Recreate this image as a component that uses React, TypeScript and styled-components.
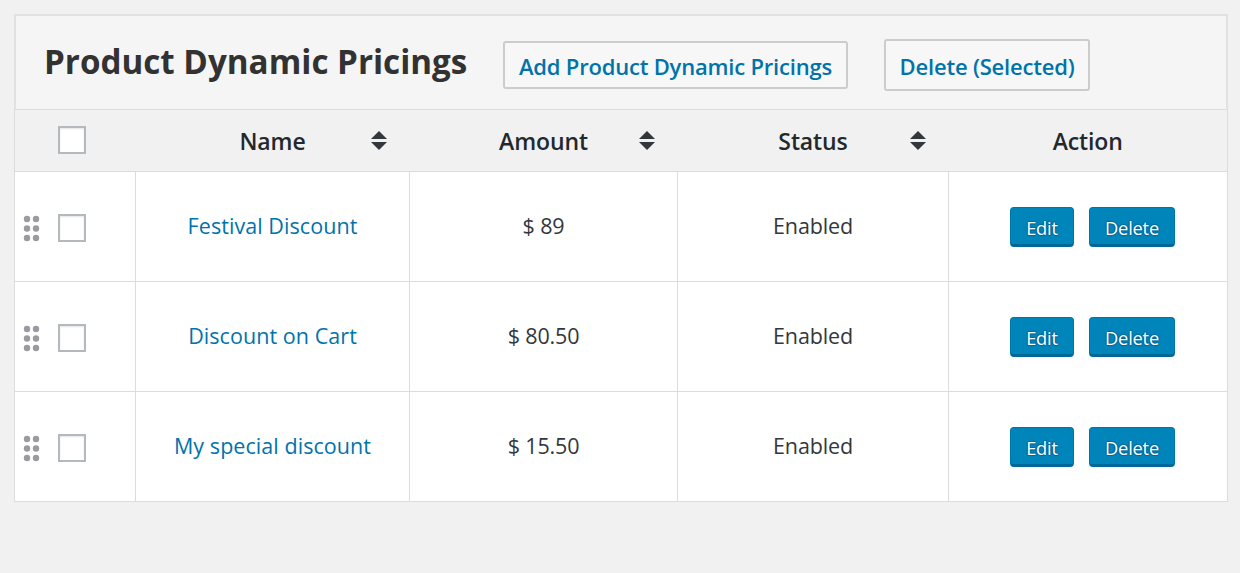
import React from "react";
import styled, { createGlobalStyle } from "styled-components";

const Global = createGlobalStyle`
  html, body { margin: 0; padding: 0; background: #f1f1f1; }
  body { font-family: "Open Sans", "Noto Sans", sans-serif; color: #32373c; }
`;

const Page = styled.div`
  width: 1240px;
  height: 573px;
  padding: 14px 12px 0 14px;
  box-sizing: border-box;
  overflow: hidden;
`;

const TitleBar = styled.div`
  display: flex;
  align-items: center;
  height: 96px;
  box-sizing: border-box;
  background: #f5f5f5;
  border: 2px solid #e1e1e1;
  border-bottom: 1px solid #dcdcdc;
  padding: 0 0 0 28px;
`;

const Title = styled.h1`
  margin: 0;
  width: 423px;
  font-size: 33.2px;
  line-height: 40px;
  font-weight: 700;
  letter-spacing: 0;
  white-space: nowrap;
  color: #323232;
  position: relative;
  top: -1px;
`;

const OutlineButton = styled.a<{ $h: number; $w: number; $ml: number }>`
  display: flex;
  align-items: center;
  justify-content: center;
  box-sizing: border-box;
  width: ${(p) => p.$w}px;
  height: ${(p) => p.$h}px;
  margin-left: ${(p) => p.$ml}px;
  padding-top: 2px;
  border: 2px solid #ccc;
  border-radius: 3px;
  background: #f7f7f7;
  color: #0073aa;
  font-size: 22px;
  font-weight: 600;
  letter-spacing: -0.2px;
  white-space: nowrap;
  position: relative;
  top: 2px;
`;

const Table = styled.table`
  width: 1213px;
  table-layout: fixed;
  border-collapse: collapse;
  background: #fff;
`;

const HeadRow = styled.tr`
  height: 61px;
  background: #f1f1f1;
`;

const HeadCell = styled.th`
  padding: 1px 0 0;
  border-bottom: 1px solid #dcdcdc;
  font-size: 23px;
  font-weight: 600;
  letter-spacing: -0.12px;
  color: #23282d;
  position: relative;
  text-align: center;
  &:first-child { border-left: 1px solid #dcdcdc; padding-top: 0; }
  &:last-child { border-right: 1px solid #dcdcdc; }
`;

const SortIcon = styled.svg`
  position: absolute;
  top: 21px;
  width: 16px;
  height: 19px;
  right: 23px;
`;

const Row = styled.tr`
  height: 110px;
`;

const Cell = styled.td`
  padding: 0;
  border: 1px solid #dcdcdc;
  text-align: center;
  font-size: 21.5px;
  letter-spacing: -0.15px;
  color: #32373c;
`;

const NameLink = styled.a`
  color: #0073aa;
  letter-spacing: 0.06px;
  position: relative;
  top: -1px;
`;

const ValueText = styled.span`
  position: relative;
  top: -1px;
`;

const CheckWrap = styled.div<{ $head?: boolean }>`
  display: flex;
  align-items: center;
  box-sizing: border-box;
  height: 100%;
  padding-left: ${(p) => (p.$head ? 43 : 8)}px;
  padding-top: ${(p) => (p.$head ? 0 : 4)}px;
  gap: 18px;
`;

const Checkbox = styled.span`
  display: block;
  width: 28px;
  height: 28px;
  box-sizing: border-box;
  border: 2px solid #b4b9be;
  background: #fff;
  box-shadow: inset 0 1px 2px rgba(0, 0, 0, 0.1);
  position: relative;
`;

const Grip = styled.svg`
  width: 17px;
  height: 27px;
  flex: none;
`;

const Actions = styled.div`
  display: flex;
  justify-content: center;
  gap: 15px;
  padding-top: 2px;
  padding-left: 9px;
`;

const ActionButton = styled.a<{ $w: number }>`
  display: flex;
  align-items: center;
  justify-content: center;
  box-sizing: border-box;
  width: ${(p) => p.$w}px;
  height: 40px;
  padding-top: 3px;
  background: #0085ba;
  border: 1px solid #0073aa;
  border-bottom: 3px solid #006799;
  border-radius: 4px;
  color: #fff;
  font-size: 18.3px;
  letter-spacing: -0.2px;
  text-shadow: 0 -1px 1px #006799, 1px 0 1px #006799, 0 1px 1px #006799, -1px 0 1px #006799;
`;

const Sort = () => (
  <SortIcon viewBox="0 0 16 19">
    <path d="M8 0 L16 8 H0 Z M0 11 H16 L8 19 Z" fill="#32373c" />
  </SortIcon>
);

const GripDots = () => (
  <Grip viewBox="0 0 17 27" fill="#9a9aa2">
    {[4, 13.5, 23].map((cy) => (
      <g key={cy}>
        <circle cx="4" cy={cy} r="3.2" />
        <circle cx="13" cy={cy} r="3.2" />
      </g>
    ))}
  </Grip>
);

const rows = [
  { name: "Festival Discount", amount: "$ 89" },
  { name: "Discount on Cart", amount: "$ 80.50" },
  { name: "My special discount", amount: "$ 15.50" },
];

export default function App() {
  return (
    <Page>
      <Global />
      <TitleBar>
        <Title>Product Dynamic Pricings</Title>
        <OutlineButton $w={345} $h={48} $ml={36}>Add Product Dynamic Pricings</OutlineButton>
        <OutlineButton $w={206} $h={52} $ml={36}>Delete (Selected)</OutlineButton>
      </TitleBar>
      <Table>
        <colgroup>
          <col style={{ width: 121 }} />
          <col style={{ width: 274 }} />
          <col style={{ width: 268 }} />
          <col style={{ width: 271 }} />
          <col style={{ width: 279 }} />
        </colgroup>
        <thead>
          <HeadRow>
            <HeadCell><CheckWrap $head><Checkbox /></CheckWrap></HeadCell>
            <HeadCell>Name<Sort /></HeadCell>
            <HeadCell>Amount<Sort /></HeadCell>
            <HeadCell>Status<Sort /></HeadCell>
            <HeadCell>Action</HeadCell>
          </HeadRow>
        </thead>
        <tbody>
          {rows.map((r) => (
            <Row key={r.name}>
              <Cell>
                <CheckWrap><GripDots /><Checkbox /></CheckWrap>
              </Cell>
              <Cell><NameLink>{r.name}</NameLink></Cell>
              <Cell><ValueText>{r.amount}</ValueText></Cell>
              <Cell><ValueText>Enabled</ValueText></Cell>
              <Cell>
                <Actions>
                  <ActionButton $w={64}>Edit</ActionButton>
                  <ActionButton $w={86}>Delete</ActionButton>
                </Actions>
              </Cell>
            </Row>
          ))}
        </tbody>
      </Table>
    </Page>
  );
}
